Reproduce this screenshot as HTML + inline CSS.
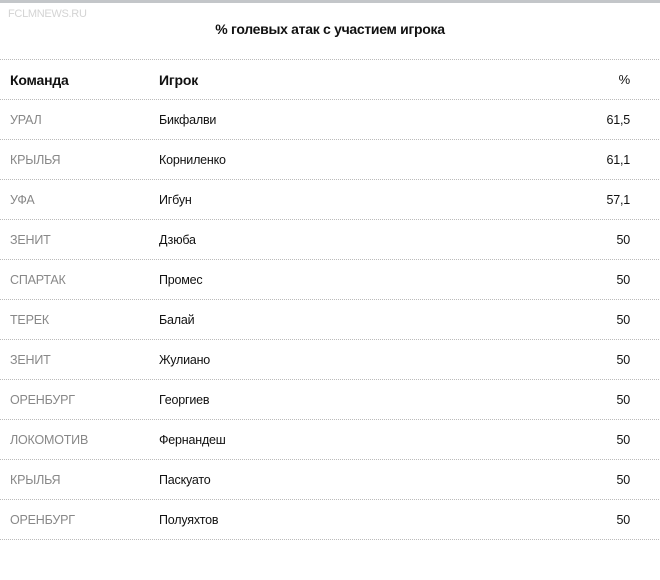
<!DOCTYPE html>
<html><head><meta charset="utf-8"><style>
body{margin:0;width:660px;height:541px;background:#fff;font-family:"Liberation Sans",sans-serif;overflow:hidden;position:relative}
.top{position:absolute;left:0;top:0;width:660px;height:3px;background:#c3c6c9}
.logo{position:absolute;left:8px;top:8px;font-size:11px;color:#d4d4d4;letter-spacing:-0.3px}
.title{position:absolute;left:0;width:660px;top:21px;text-align:center;font-weight:bold;font-size:14px;color:#111;letter-spacing:-0.3px}
.row{position:absolute;left:0;width:659px;height:40px;border-top:1px dotted #bbb;font-size:12.5px;letter-spacing:-0.2px}
.row span{position:absolute;top:13px}
.a{left:10px;color:#888}
.b{left:159px;color:#111}
.c{right:29px;color:#111}
.h span{font-weight:bold;font-size:14px;color:#111;top:12px}
.h span.c{font-weight:normal;font-size:13px}
</style></head><body>
<div class="top"></div>
<div class="logo">FCLMNEWS.RU</div>
<div class="title">% голевых атак с участием игрока</div>
<div class="row h" style="top:59px"><span class="a" style="color:#111">Команда</span><span class="b">Игрок</span><span class="c">%</span></div>
<div class="row" style="top:99px"><span class="a">УРАЛ</span><span class="b">Бикфалви</span><span class="c">61,5</span></div>
<div class="row" style="top:139px"><span class="a">КРЫЛЬЯ</span><span class="b">Корниленко</span><span class="c">61,1</span></div>
<div class="row" style="top:179px"><span class="a">УФА</span><span class="b">Игбун</span><span class="c">57,1</span></div>
<div class="row" style="top:219px"><span class="a">ЗЕНИТ</span><span class="b">Дзюба</span><span class="c">50</span></div>
<div class="row" style="top:259px"><span class="a">СПАРТАК</span><span class="b">Промес</span><span class="c">50</span></div>
<div class="row" style="top:299px"><span class="a">ТЕРЕК</span><span class="b">Балай</span><span class="c">50</span></div>
<div class="row" style="top:339px"><span class="a">ЗЕНИТ</span><span class="b">Жулиано</span><span class="c">50</span></div>
<div class="row" style="top:379px"><span class="a">ОРЕНБУРГ</span><span class="b">Георгиев</span><span class="c">50</span></div>
<div class="row" style="top:419px"><span class="a">ЛОКОМОТИВ</span><span class="b">Фернандеш</span><span class="c">50</span></div>
<div class="row" style="top:459px"><span class="a">КРЫЛЬЯ</span><span class="b">Паскуато</span><span class="c">50</span></div>
<div class="row" style="top:499px"><span class="a">ОРЕНБУРГ</span><span class="b">Полуяхтов</span><span class="c">50</span></div>
<div class="row" style="top:539px"></div>
</body></html>
